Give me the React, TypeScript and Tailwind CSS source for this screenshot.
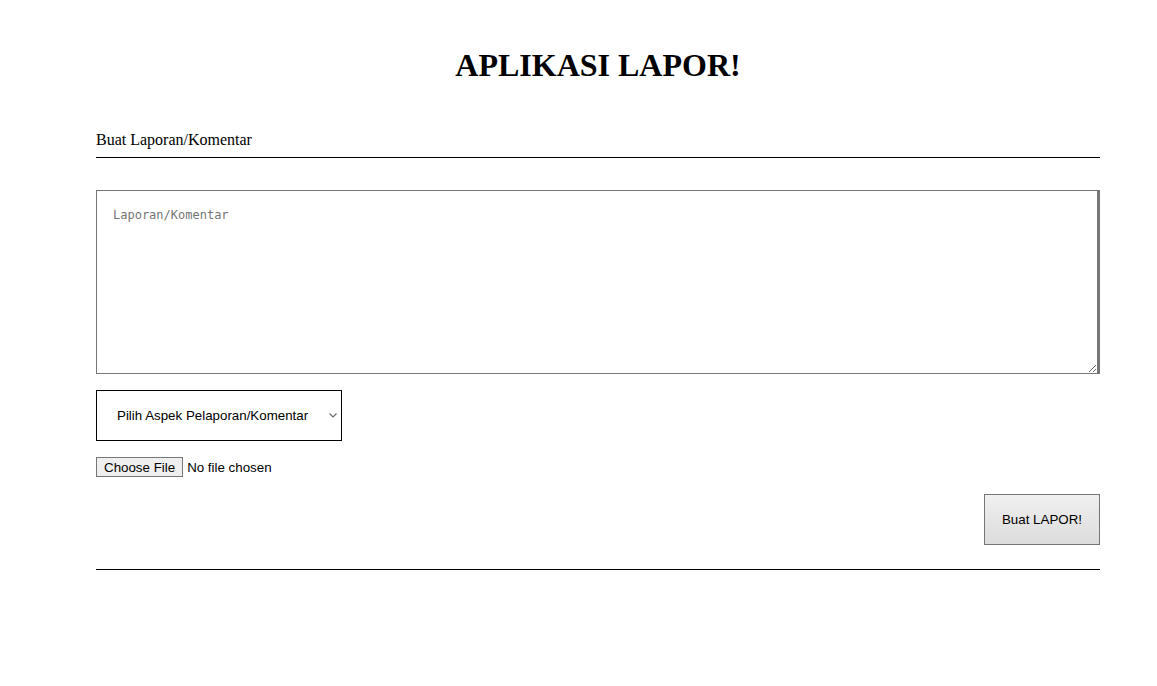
export default function App() {
  return (
    <div className="min-h-screen bg-white">
      <div className="ml-[96px] w-[1004px] font-['Liberation_Serif',serif] text-black">
        <h1 className="pt-[47px] text-center text-[32px] font-bold leading-[37px]">APLIKASI LAPOR!</h1>

        <div className="mt-[47px] border-b border-black pb-[8px] text-[16px] leading-[18px]">
          Buat Laporan/Komentar
        </div>

        <form className="mt-[32px] flex flex-col" onSubmit={(e) => e.preventDefault()}>
          <textarea
            placeholder="Laporan/Komentar"
            className="block h-[184px] w-full resize-y border border-r-[3px] border-[#767676] px-[16px] pt-[17px] pb-[16px] font-['DejaVu_Sans_Mono',monospace] text-[12px] leading-[14px] outline-none placeholder:text-[#757575]"
          />

          <div className="relative mt-[16px] w-[246px]">
            <select
              defaultValue=""
              className="h-[51px] w-full appearance-none border border-black bg-white pl-[20px] pr-[24px] font-['Liberation_Sans',sans-serif] text-[13.33px] text-black outline-none"
            >
              <option value="" disabled>
                Pilih Aspek Pelaporan/Komentar
              </option>
              <option value="1">Mahasiswa</option>
              <option value="2">Infrastruktur</option>
              <option value="3">Pengajar</option>
            </select>
            <svg
              className="pointer-events-none absolute right-[4px] top-[21px]"
              width="10"
              height="8"
              viewBox="0 0 10 8"
              fill="none"
            >
              <path d="M1.5 2.5 L5 6 L8.5 2.5" stroke="#6b6b6b" strokeWidth="1.2" />
            </svg>
          </div>

          <input
            type="file"
            className="mt-[16px] h-[20px] font-['Liberation_Sans',sans-serif] text-[13.33px] leading-[20px] file:mr-[4px] file:h-[20px] file:border file:border-[#767676] file:bg-[#efefef] file:px-[7px] file:py-0 file:text-[13.33px]"
          />

          <div className="mt-[17px] flex justify-end">
            <button
              type="submit"
              className="h-[51px] w-[116px] border border-[#767676] bg-gradient-to-b from-[#f0f0f0] to-[#dcdcdc] font-['Liberation_Sans',sans-serif] text-[13.33px] text-black"
            >
              Buat LAPOR!
            </button>
          </div>
        </form>

        <div className="mt-[24px] border-b border-black" />
      </div>
    </div>
  )
}
